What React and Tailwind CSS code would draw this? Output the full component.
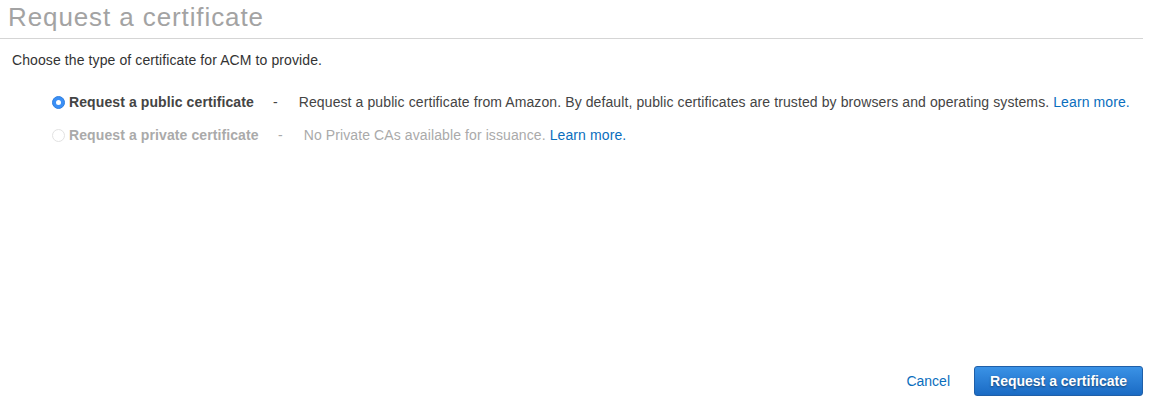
export default function App() {
  const font = { fontFamily: '"Liberation Sans", Arial, sans-serif' };
  return (
    <div className="w-[1158px] h-[417px] bg-white flex flex-col" style={font}>
      <div className="mr-[15px] border-b border-[#d5d5d5] pl-[8px] pt-[1px] h-[39px]">
        <h1 className="text-[26px] leading-[32px] tracking-[0.9px] text-[#a3a3a3] font-normal">Request a certificate</h1>
      </div>
      <p className="pl-[12px] pt-[13px] text-[14px] leading-[16px] tracking-[0.1px] text-[#333]">
        Choose the type of certificate for ACM to provide.
      </p>
      <div className="pl-[52px] pt-[26px] flex flex-col gap-[17px] text-[14px] leading-[16px] tracking-[0.1px]">
        <div className="flex items-center">
          <span className="w-[13px] h-[13px] rounded-full bg-[#3b8ff5] border border-[#2f7fe0] flex items-center justify-center mr-[4px]">
            <span className="w-[5px] h-[5px] rounded-full bg-white"></span>
          </span>
          <span className="font-bold text-[#444] w-[184px] whitespace-nowrap">Request a public certificate</span>
          <span className="text-[#444] ml-[20px] mr-[21px]">-</span>
          <span className="text-[#444] whitespace-nowrap">
            Request a public certificate from Amazon. By default, public certificates are trusted by browsers and operating systems.{" "}
            <a className="text-[#0a6ebd]">Learn more.</a>
          </span>
        </div>
        <div className="flex items-center">
          <span className="w-[13px] h-[13px] rounded-full bg-white border border-[#e2e2e2] mr-[4px]"></span>
          <span className="font-bold text-[#aaa] w-[189px] whitespace-nowrap">Request a private certificate</span>
          <span className="text-[#aaa] ml-[20px] mr-[21px]">-</span>
          <span className="text-[#aaa] whitespace-nowrap">
            No Private CAs available for issuance.{" "}
            <a className="text-[#0a6ebd]">Learn more.</a>
          </span>
        </div>
      </div>
      <div className="flex-1"></div>
      <div className="flex items-center justify-end pr-[15px] pb-[21px] gap-[24px]">
        <a className="text-[14px] text-[#0a6ebd]">Cancel</a>
        <button
          className="h-[30px] rounded-[3px] border border-[#1f5fa8] bg-gradient-to-b from-[#3a92e6] to-[#1a6bc4] text-white text-[14px] font-bold"
          style={{ ...font, textShadow: "0 1px 2px rgba(0,0,0,0.45)", width: "169px" }}
        >
          Request a certificate
        </button>
      </div>
    </div>
  );
}
